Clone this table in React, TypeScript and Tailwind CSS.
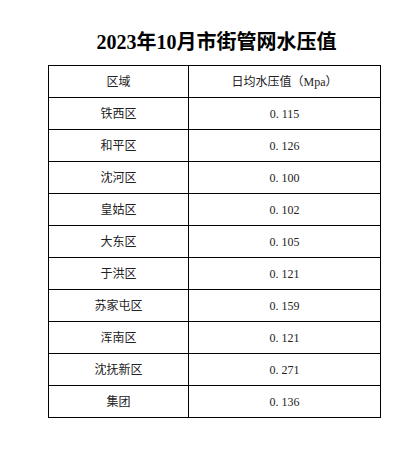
const rows = [
    { area: "铁西区", value: "0. 115" },
    { area: "和平区", value: "0. 126" },
    { area: "沈河区", value: "0. 100" },
    { area: "皇姑区", value: "0. 102" },
    { area: "大东区", value: "0. 105" },
    { area: "于洪区", value: "0. 121" },
    { area: "苏家屯区", value: "0. 159" },
    { area: "浑南区", value: "0. 121" },
    { area: "沈抚新区", value: "0. 271" },
    { area: "集团", value: "0. 136" },
];

function App() {
    return (
        <div className="w-[418px] h-[450px] bg-white pt-[30px] pl-[48px] font-['Liberation_Serif','Noto_Sans_CJK_SC',serif] text-black">
            <h1 className="w-[333px] pl-[4px] text-center text-[20px] leading-[24px] font-bold">
                2023年10月市街管网水压值
            </h1>

            <table className="mt-[11px] w-[333px] border-collapse text-[12px] text-[#222]">
                <tbody>
                    <tr className="h-[32px]">
                        <td className="w-[140px] border border-black text-center">区域</td>
                        <td className="border border-black text-center">日均水压值（Mpa）</td>
                    </tr>
                    {rows.map((row) => (
                        <tr key={row.area} className="h-[32px]">
                            <td className="border border-black text-center">{row.area}</td>
                            <td className="border border-black text-center">{row.value}</td>
                        </tr>
                    ))}
                </tbody>
            </table>
        </div>
    );
}

export default App;
